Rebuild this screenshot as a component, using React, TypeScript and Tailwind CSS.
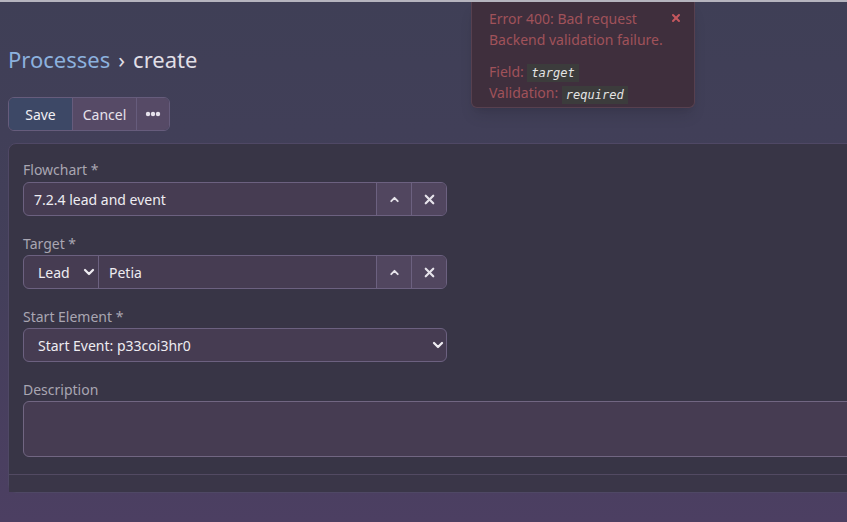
import { ChevronDown, ChevronUp, X } from 'lucide-react';

const font = { fontFamily: '"Noto Sans", "Open Sans", sans-serif' };
const mono = { fontFamily: '"DejaVu Sans Mono", monospace' };

function Label({ children }: { children: React.ReactNode }) {
	return <div className="h-[22px] text-[14px] leading-[22px] text-[#a9a6b2]">{children}</div>;
}

function GroupButtons() {
	return (
		<>
			<button className="flex w-[35px] items-center justify-center border-l border-[#6c6180] bg-[#51465f] text-[#e6e3ea]">
				<ChevronUp size={13} strokeWidth={3.5} />
			</button>
			<button className="flex w-[35px] items-center justify-center border-l border-[#6c6180] bg-[#51465f] text-[#e6e3ea]">
				<X size={15} strokeWidth={3.5} />
			</button>
		</>
	);
}

function Dots() {
	return (
		<svg width="16" height="6" viewBox="0 0 16 6" fill="currentColor">
			<circle cx="3" cy="3" r="2.2" />
			<circle cx="8" cy="3" r="2.2" />
			<circle cx="13" cy="3" r="2.2" />
		</svg>
	);
}

function Code({ children }: { children: React.ReactNode }) {
	return (
		<code className="inline-block bg-[#3c3c3c] px-[4px] align-middle text-[12px] leading-[18px] text-[#e4e4e4] italic" style={mono}>
			{children}
		</code>
	);
}

export default function App() {
	return (
		<div
			className="relative h-[522px] w-full overflow-hidden bg-gradient-to-b from-[#3f3f56] via-[#433f5a] to-[#4c3f62]"
			style={font}
		>
			<div className="h-[2px] bg-[#b5b4be]" />

			<div className="px-2">
				<h1 className="pt-[42px] text-[22px] leading-[30px] text-[#e1dfe6]">
					<span className="text-[#8cb1de]">Processes</span>
					<span className="mx-[8px]">›</span>create
				</h1>

				{/* toolbar */}
				<div className="mt-[23px] flex h-[34px] w-fit overflow-hidden rounded-[6px] border border-[#665c7c] text-[14px] text-[#f1eff4]">
					<button className="w-[63px] bg-[#3d4866]">Save</button>
					<button className="w-[64px] border-l border-[#665c7c] bg-[#564a66] text-[#e6e2ec]">Cancel</button>
					<button className="flex w-[33px] items-center justify-center border-l border-[#665c7c] bg-[#564a66] text-[#e6e2ec]">
						<Dots />
					</button>
				</div>

				{/* form card */}
				<div className="mt-[12px] w-[900px] rounded-[8px] border border-[#4f4865] bg-[#383546]">
					<div className="flex flex-col gap-[17px] px-[14px] pt-[15px] pb-[17px]">
						<div>
							<Label>Flowchart *</Label>
							<div className="mt-[1px] flex h-[34px] w-[424px] overflow-hidden rounded-[6px] border border-[#6c6180] bg-[#463c52]">
								<div className="flex flex-1 items-center px-[10px] text-[14px] text-[#eeecf1]">7.2.4 lead and event</div>
								<GroupButtons />
							</div>
						</div>

						<div>
							<Label>Target *</Label>
							<div className="flex h-[34px] w-[424px] overflow-hidden rounded-[6px] border border-[#6c6180] bg-[#463c52]">
								<div className="flex w-[75px] items-center justify-between border-r border-[#6c6180] pr-[1px] pl-[14px] text-[14px] text-[#eeecf1]">
									Lead
									<ChevronDown size={16} strokeWidth={3.4} />
								</div>
								<div className="flex flex-1 items-center px-[10px] text-[14px] text-[#eeecf1]">Petia</div>
								<GroupButtons />
							</div>
						</div>

						<div>
							<Label>Start Element *</Label>
							<div className="flex h-[34px] w-[424px] items-center justify-between rounded-[6px] border border-[#6c6180] bg-[#463c52] pr-[0px] pl-[14px] text-[14px] text-[#eeecf1]">
								Start Event: p33coi3hr0
								<ChevronDown size={16} strokeWidth={3.4} />
							</div>
						</div>

						<div>
							<Label>Description</Label>
							<div className="h-[56px] rounded-[6px] border border-[#716682] bg-[#463c52]" />
						</div>
					</div>
					<div className="h-[18px] border-t border-[#524a62] bg-[#3a3648]" />
				</div>
			</div>

			{/* error toast */}
			<div className="absolute top-[2px] left-[471px] w-[224px] rounded-b-[6px] border border-t-0 border-[#57404f] bg-[#3f2f3d] px-[17px] pt-[6px] pb-[3px] text-[14px] leading-[21px] text-[#a0525a] shadow-lg">
				<button className="absolute top-[10px] right-[12px] text-[#c5575e]">
					<X size={12} strokeWidth={4} />
				</button>
				<div>Error 400: Bad request</div>
				<div>Backend validation failure.</div>
				<div className="mt-[11px]">
					Field: <Code>target</Code>
				</div>
				<div>
					Validation: <Code>required</Code>
				</div>
			</div>
		</div>
	);
}
